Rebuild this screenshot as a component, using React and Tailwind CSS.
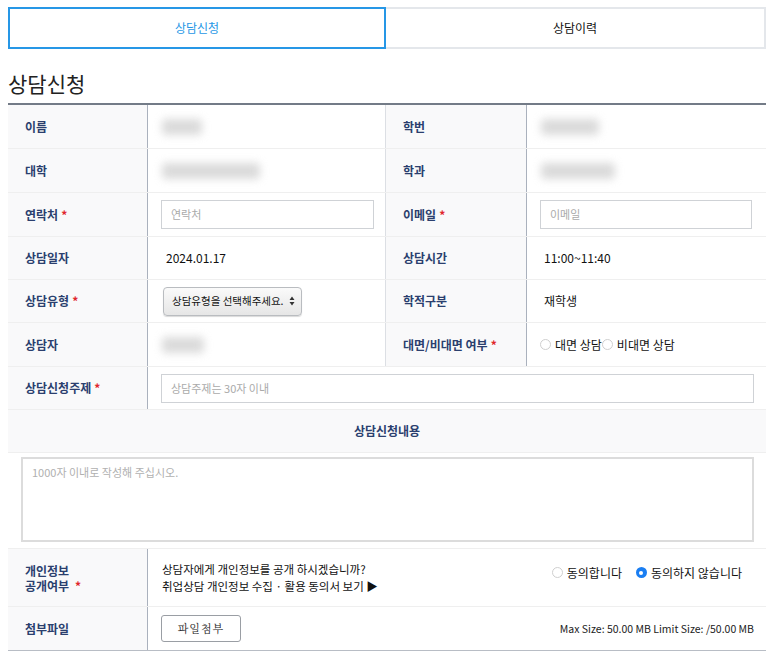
import React from "react";

const F = { fontFamily: '"Noto Sans CJK KR", "Noto Sans", sans-serif' };

function Label({ children, req, className = "", w = "w-[140px]" }) {
  return (
    <div className={`${w} shrink-0 bg-[#f9f9fa] flex items-center pl-[17px] text-[12px] font-bold text-[#2b3f6e] ${className}`}>
      <span>{children}</span>
      {req && <span className="text-[#e0262b] ml-[3px]">*</span>}
    </div>
  );
}

function Blur({ w }) {
  return <div className="h-[16px] rounded bg-[#cbcbcb] blur-[4px] opacity-70" style={{ width: w }} />;
}

function Radio({ checked }) {
  return checked ? (
    <span className="inline-block w-[11px] h-[11px] rounded-full bg-[#1a7ef2] border-[3px] border-[#1a7ef2] relative">
      <span className="absolute inset-0 m-auto w-[4px] h-[4px] rounded-full bg-white" />
    </span>
  ) : (
    <span className="inline-block w-[11px] h-[11px] rounded-full border border-[#cfcfcf] bg-white" />
  );
}

export default function App() {
  return (
    <div className="w-[772px] h-[654px] bg-white overflow-hidden" style={F}>
      <div className="pt-[7px] px-[8px] pr-[6px] flex">
        <div className="w-[378px] h-[42px] border-2 border-[#2697e6] flex items-center justify-center text-[12px] text-[#2697e6]">상담신청</div>
        <div className="flex-1 h-[42px] border-2 border-l-0 border-[#e4e7eb] flex items-center justify-center text-[12px] text-[#111]">상담이력</div>
      </div>
      <h1 className="px-[8px] mt-[19px] text-[21px] leading-[30px] text-[#222]">상담신청</h1>
      <div className="mx-[8px] mr-[6px] mt-[5px] border-t-[2px] border-[#737b87] text-[12px] text-[#111]">
        <div className="flex h-[44px] border-b border-[#efefef]">
          <Label className="border-r border-[#aab1bd]">이름</Label>
          <div className="w-[238px] flex items-center pl-[14px] border-r border-[#dcdfe4]"><Blur w={40} /></div>
          <Label w="w-[141px]" className="border-r border-[#aab1bd]">학번</Label>
          <div className="flex-1 flex items-center pl-[14px]"><Blur w={58} /></div>
        </div>
        <div className="flex h-[44px] border-b border-[#efefef]">
          <Label className="border-r border-[#aab1bd]">대학</Label>
          <div className="w-[238px] flex items-center pl-[14px] border-r border-[#dcdfe4]"><Blur w={98} /></div>
          <Label w="w-[141px]" className="border-r border-[#aab1bd]">학과</Label>
          <div className="flex-1 flex items-center pl-[14px]"><Blur w={74} /></div>
        </div>
        <div className="flex h-[44px] border-b border-[#efefef]">
          <Label req className="border-r border-[#aab1bd]">연락처</Label>
          <div className="w-[238px] flex items-center pl-[13px] border-r border-[#dcdfe4]">
            <div className="w-[213px] h-[29px] border border-[#cfd2d6] flex items-center px-[9px] text-[11px] text-[#aaa]">연락처</div>
          </div>
          <Label w="w-[141px]" req className="border-r border-[#aab1bd]">이메일</Label>
          <div className="flex-1 flex items-center pl-[13px]">
            <div className="w-[212px] h-[29px] border border-[#cfd2d6] flex items-center px-[9px] text-[11px] text-[#aaa]">이메일</div>
          </div>
        </div>
        <div className="flex h-[43px] border-b border-[#efefef]">
          <Label className="border-r border-[#aab1bd]">상담일자</Label>
          <div className="w-[238px] flex items-center pl-[18px] border-r border-[#dcdfe4]">2024.01.17</div>
          <Label w="w-[141px]" className="border-r border-[#aab1bd]">상담시간</Label>
          <div className="flex-1 flex items-center pl-[17px]">11:00~11:40</div>
        </div>
        <div className="flex h-[43px] border-b border-[#efefef]">
          <Label req className="border-r border-[#aab1bd]">상담유형</Label>
          <div className="w-[238px] flex items-center pl-[15px] border-r border-[#dcdfe4]">
            <div className="w-[139px] h-[29px] rounded-[4px] border border-[#b9bcc0] bg-gradient-to-b from-[#fafafa] to-[#e6e6e6] shadow-[0_1px_1px_rgba(0,0,0,0.15)] flex items-center justify-between pl-[8px] pr-[6px] text-[10.5px] text-[#111]">
              <span>상담유형을 선택해주세요.</span>
              <svg width="6" height="10" viewBox="0 0 6 10"><path d="M3 0.5 L5.5 4 L0.5 4 Z M3 9.5 L5.5 6 L0.5 6 Z" fill="#333" /></svg>
            </div>
          </div>
          <Label w="w-[141px]" className="border-r border-[#aab1bd]">학적구분</Label>
          <div className="flex-1 flex items-center pl-[17px]">재학생</div>
        </div>
        <div className="flex h-[44px] border-b border-[#efefef]">
          <Label className="border-r border-[#aab1bd]">상담자</Label>
          <div className="w-[238px] flex items-center pl-[14px] border-r border-[#dcdfe4]"><Blur w={42} /></div>
          <Label w="w-[141px]" req className="border-r border-[#aab1bd]">대면/비대면 여부</Label>
          <div className="flex-1 flex items-center pl-[13px]">
            <Radio /><span className="ml-[4px]">대면 상담</span><Radio /><span className="ml-[4px]">비대면 상담</span>
          </div>
        </div>
        <div className="flex h-[43px] border-b border-[#efefef]">
          <Label req className="border-r border-[#aab1bd]">상담신청주제</Label>
          <div className="flex-1 flex items-center pl-[13px] pr-[12px]">
            <div className="w-full h-[29px] border border-[#cfd2d6] flex items-center px-[9px] text-[11px] text-[#aaa]">상담주제는 30자 이내</div>
          </div>
        </div>
        <div className="flex h-[43px] bg-[#f9f9fa] border-b border-[#efefef] items-center justify-center font-bold text-[#2b3f6e]">상담신청내용</div>
        <div className="h-[96px] border-b border-[#efefef] pl-[13px] pr-[12px] pt-[4px]">
          <div className="w-full h-[85px] border-2 border-[#dcdcdc] px-[9px] pt-[5px] text-[11px] text-[#b0b0b0]">1000자 이내로 작성해 주십시오.</div>
        </div>
        <div className="flex h-[58px] border-b border-[#efefef]">
          <div className="w-[140px] shrink-0 bg-[#f9f9fa] border-r border-[#aab1bd] flex flex-col justify-center pl-[17px] text-[12px] font-bold text-[#2b3f6e] leading-[15px]">
            <div>개인정보</div>
            <div>공개여부 <span className="text-[#e0262b] ml-[3px]">*</span></div>
          </div>
          <div className="flex-1 flex items-center justify-between pl-[14px] pr-[24px]">
            <div className="leading-[17px] text-[11.5px]">
              <div>상담자에게 개인정보를 공개 하시겠습니까?</div>
              <div>취업상담 개인정보 수집 · 활용 동의서 보기 ▶</div>
            </div>
            <div className="flex items-center gap-[4px] -mt-[10px]">
              <Radio /><span className="mr-[10px]">동의합니다</span><Radio checked /><span>동의하지 않습니다</span>
            </div>
          </div>
        </div>
        <div className="flex h-[44px] border-b border-[#b8bdc5]">
          <div className="w-[140px] shrink-0 bg-[#f9f9fa] border-r border-[#aab1bd] flex items-center pl-[17px] text-[12px] font-bold text-[#2b3f6e]">첨부파일</div>
          <div className="flex-1 flex items-center justify-between pl-[13px] pr-[12px]">
            <div className="w-[80px] h-[27px] rounded-[3px] border border-[#9a9ea4] flex items-center justify-center text-[11px] text-[#222] tracking-[1px]" style={{ fontFamily: '"Noto Serif CJK KR", "Noto Sans CJK KR", serif' }}>파일첨부</div>
            <div className="text-[10.5px] text-[#222]">Max Size: 50.00 MB Limit Size: /50.00 MB</div>
          </div>
        </div>
      </div>
    </div>
  );
}
